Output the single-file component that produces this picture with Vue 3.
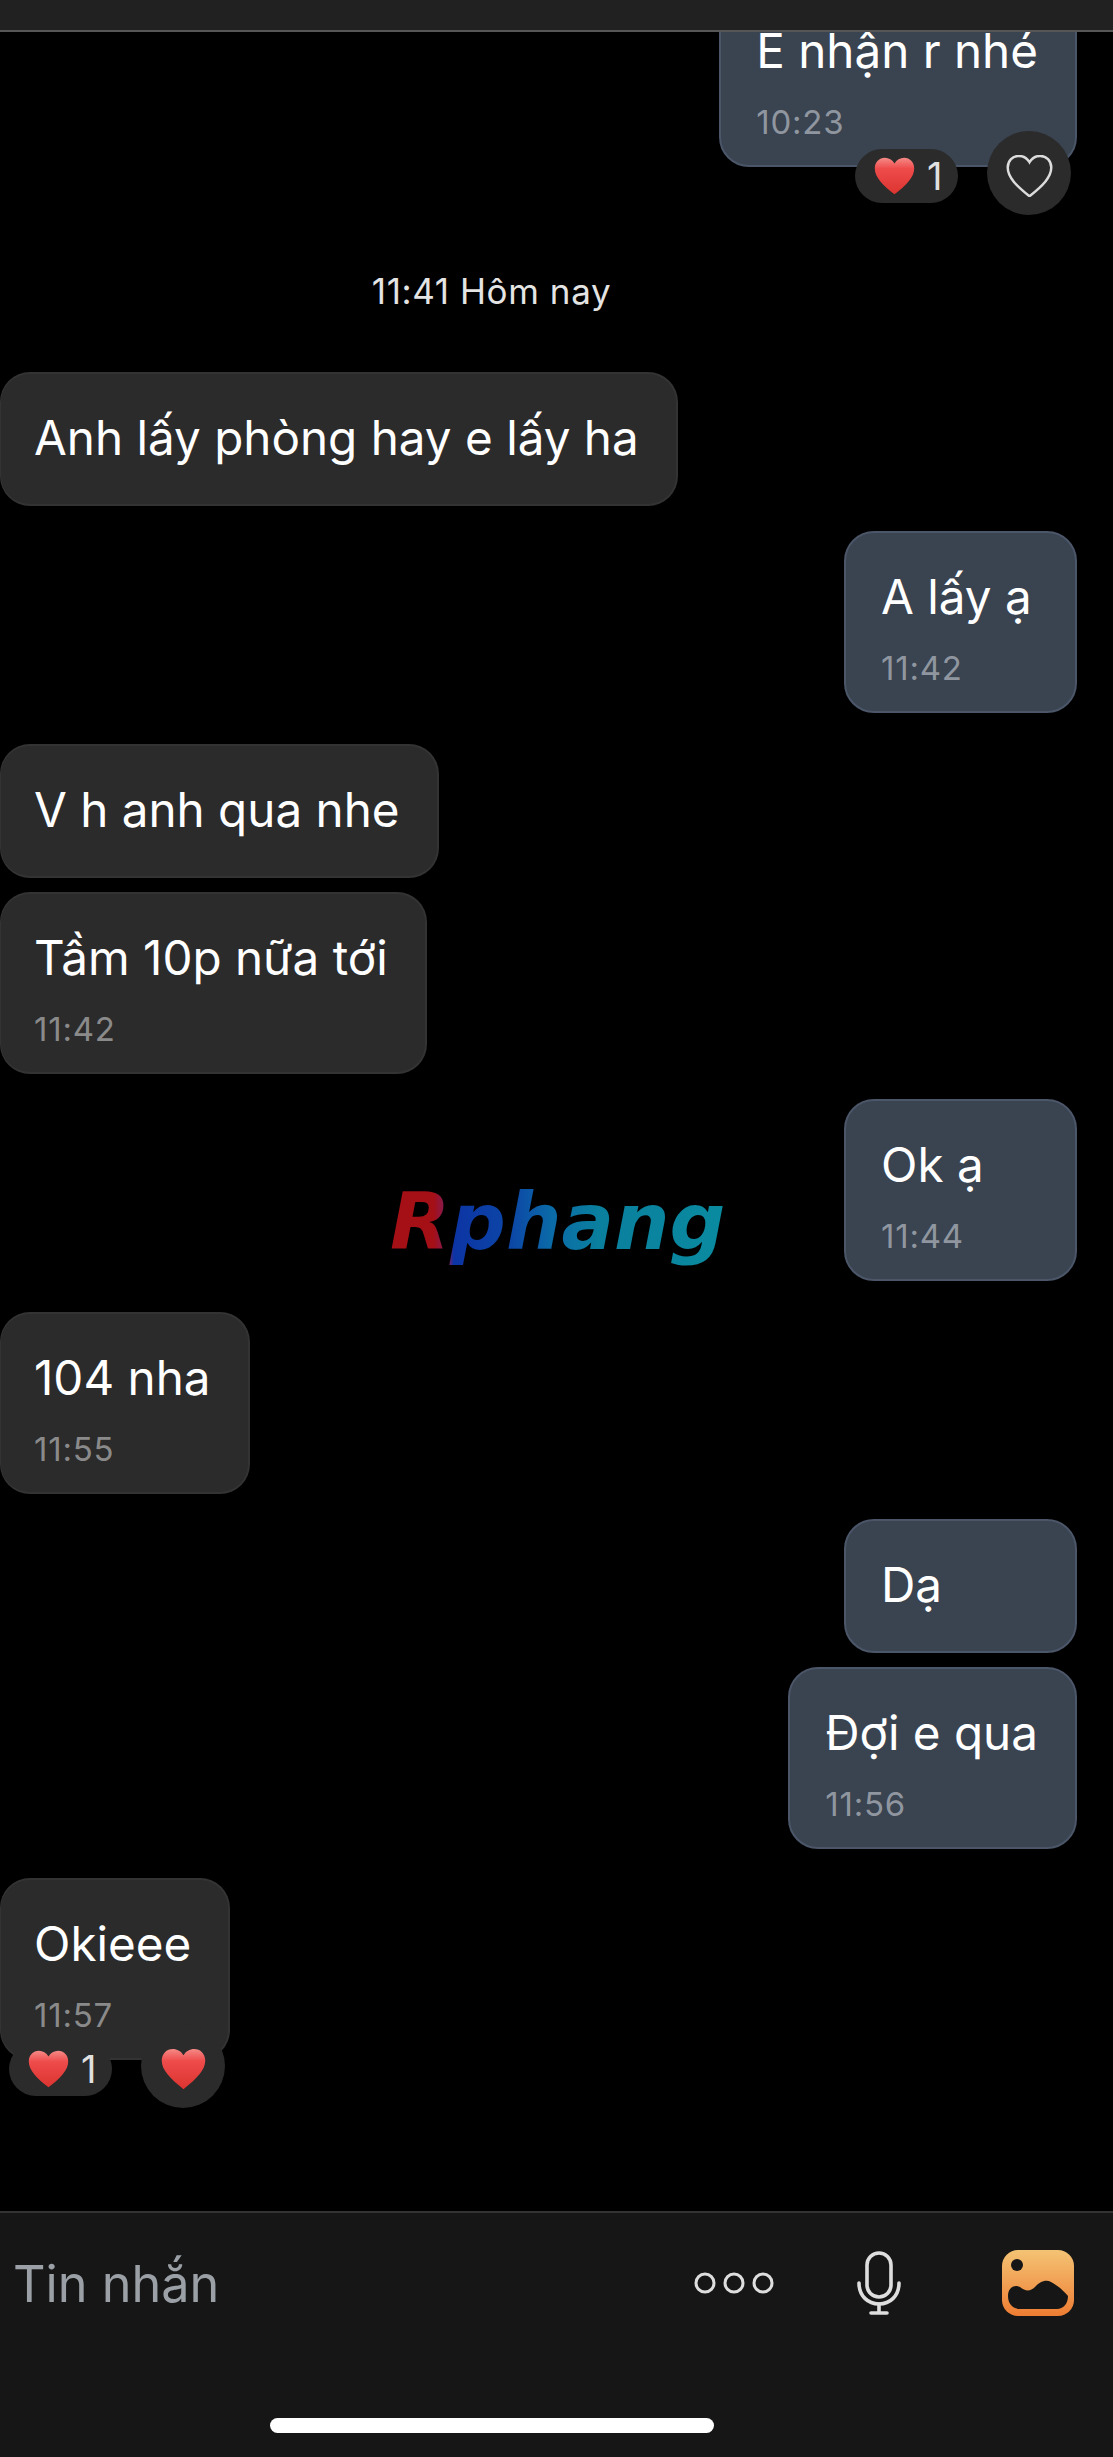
<script setup>
const messages = [
  { id: 1, text: 'E nhận r nhé', time: '10:23', mine: true, gap: 'first', reaction: { liked: false } },
  { id: 2, stamp: '11:41 Hôm nay' },
  { id: 3, text: 'Anh lấy phòng hay e lấy ha', gap: 'none' },
  { id: 4, text: 'A lấy ạ', time: '11:42', mine: true, gap: 'mid' },
  { id: 5, text: 'V h anh qua nhe', gap: 'wide' },
  { id: 6, text: 'Tầm 10p nữa tới', time: '11:42', gap: 'tight' },
  { id: 7, text: 'Ok ạ', time: '11:44', mine: true, gap: 'mid' },
  { id: 8, text: '104 nha', time: '11:55', gap: 'wide' },
  { id: 9, text: 'Dạ', mine: true, gap: 'mid' },
  { id: 10, text: 'Đợi e qua', time: '11:56', mine: true, gap: 'tight' },
  { id: 11, text: 'Okieee', time: '11:57', gap: 'last', reaction: { liked: true } }
]

const heart = 'M12 21.6C5.2 16.2.6 11.7.6 6.6.6 3 3.2.5 6.4.5c2.3 0 4.4 1.2 5.6 3.3C13.2 1.7 15.3.5 17.6.5c3.2 0 5.8 2.5 5.8 6.1 0 5.1-4.6 9.6-11.4 15z'
</script>

<template>
  <div class="page">
    <svg class="defs" width="0" height="0" aria-hidden="true">
      <defs>
        <linearGradient id="heartFill" x1="0" y1="0" x2="0" y2="1">
          <stop offset="0" stop-color="#f58a86" />
          <stop offset="0.3" stop-color="#ee4b4b" />
          <stop offset="1" stop-color="#dc3430" />
        </linearGradient>
        <linearGradient id="photoFill" x1="0" y1="0" x2="0" y2="1">
          <stop offset="0" stop-color="#f4c374" />
          <stop offset="1" stop-color="#ee7d33" />
        </linearGradient>
      </defs>
    </svg>

    <div class="top-bar"></div>

    <main class="chat">
      <template v-for="m in messages" :key="m.id">
        <div v-if="m.stamp" class="stamp">{{ m.stamp }}</div>
        <div v-else class="row" :class="[m.mine ? 'mine' : 'theirs', 'gap-' + m.gap]">
          <div class="bubble" :class="{ timed: m.time }">
            <div class="text">{{ m.text }}</div>
            <div v-if="m.time" class="time">{{ m.time }}</div>
            <div v-if="m.reaction" class="reacts">
              <div class="pill">
                <svg class="pill-heart" viewBox="0 0 24 22"><path :d="heart" fill="url(#heartFill)" /></svg>
                <span>1</span>
              </div>
              <div class="circle">
                <svg v-if="m.reaction.liked" class="big-heart" viewBox="0 0 24 22"><path :d="heart" fill="url(#heartFill)" /></svg>
                <svg v-else class="big-heart" viewBox="0 0 24 22"><path :d="heart" fill="none" stroke="#dcdcdc" stroke-width="1.3" /></svg>
              </div>
            </div>
          </div>
        </div>
      </template>

      <div class="watermark">Rphang</div>
    </main>

    <footer class="composer">
      <div class="input-row">
        <span class="placeholder">Tin nhắn</span>
        <svg class="dots" viewBox="0 0 80 22" fill="none" stroke="#dedede" stroke-width="3">
          <circle cx="11" cy="11" r="9" />
          <circle cx="40" cy="11" r="9" />
          <circle cx="69" cy="11" r="9" />
        </svg>
        <svg class="mic" viewBox="0 0 44 64" fill="none" stroke="#dedede" stroke-width="3.6" stroke-linecap="round">
          <rect x="10" y="2" width="24" height="44" rx="12" />
          <path d="M2 32c0 13 9 21 20 21s20-8 20-21" />
          <path d="M22 53v9M14 62h16" />
        </svg>
        <svg class="photo" viewBox="0 0 72 66">
          <rect width="72" height="66" rx="16" fill="url(#photoFill)" />
          <circle cx="15" cy="15" r="6" fill="#161616" />
          <path d="M6 46c0-8 6-12 12-9 5 4 10 5 15 0 4-5 11-8 16-5 6 3 13 9 17 14 0 8-5 13-11 13H18C11 59 6 54 6 46z" fill="#161616" />
        </svg>
      </div>
      <div class="home-row"><div class="home"></div></div>
    </footer>
  </div>
</template>

<style>
body {
  background: #000;
}
</style>

<style scoped>
.page {
  position: relative;
  width: 1113px;
  height: 2457px;
  display: flex;
  flex-direction: column;
  background: #000;
  overflow: hidden;
  font-family: Inter, "Noto Sans", sans-serif;
  color: #fff;
}

.defs {
  position: absolute;
}

.top-bar {
  height: 32px;
  box-sizing: border-box;
  background: #212121;
  border-bottom: 2px solid #565656;
  flex: none;
}

.chat {
  position: relative;
  flex: 1;
  overflow: hidden;
  display: flex;
  flex-direction: column;
}

.stamp {
  margin-top: 104px;
  margin-bottom: 61px;
  padding-right: 130px;
  text-align: center;
  font-size: 35px;
  line-height: 40px;
  letter-spacing: 0.6px;
  color: #e4e4e4;
}

.row {
  display: flex;
}

.mine {
  justify-content: flex-end;
  padding-right: 36px;
}

.gap-first { margin-top: -47px; }
.gap-none { margin-top: 0; }
.gap-tight { margin-top: 14px; }
.gap-mid { margin-top: 25px; }
.gap-wide { margin-top: 31px; }
.gap-last { margin-top: 29px; }

.bubble {
  position: relative;
  box-sizing: border-box;
  padding: 37px 37px 40px 33px;
  border-radius: 30px;
  border: 2px solid #333;
  background: #2b2b2b;
}

.theirs .bubble {
  border-left-width: 1px;
}

.mine .bubble {
  min-width: 233px;
  padding-left: 35px;
  background: #3a4350;
  border-color: #4b5669;
}

.bubble.timed {
  padding-bottom: 23px;
}

.text {
  font-size: 47.6px;
  line-height: 53px;
  white-space: nowrap;
}

.time {
  margin-top: 25px;
  font-size: 33px;
  line-height: 40px;
  letter-spacing: 0.8px;
  color: #8a8a8a;
}

.mine .time {
  color: #8f969f;
}

.reacts {
  position: absolute;
  display: flex;
  align-items: center;
  gap: 29px;
  bottom: -50px;
}

.mine .reacts {
  right: 4px;
}

.theirs .reacts {
  left: 8px;
}

.pill {
  display: flex;
  align-items: center;
  gap: 11px;
  box-sizing: border-box;
  width: 103px;
  height: 54px;
  margin-top: 6px;
  padding-left: 18px;
  border-radius: 27px;
  background: #2b2b2b;
  font-size: 38px;
  color: #e0e0e0;
}

.pill-heart {
  width: 43px;
  height: 38px;
}

.circle {
  display: flex;
  align-items: center;
  justify-content: center;
  width: 84px;
  height: 84px;
  border-radius: 50%;
  background: #2b2b2b;
}

.big-heart {
  width: 47px;
  height: 42px;
  margin-top: 5px;
}

.watermark {
  position: absolute;
  left: 390px;
  top: 1140px;
  font-family: "DejaVu Sans", sans-serif;
  font-size: 78px;
  line-height: 100px;
  font-weight: 700;
  font-style: italic;
  white-space: nowrap;
  background: linear-gradient(90deg, #a50f16 0, #a50f16 13%, #7a1f66 17.5%, #0c34a4 19%, #0c46a6 36%, #0b6aa8 48%, #0a7f9e 62%, #0a8ba0 100%);
  -webkit-background-clip: text;
  background-clip: text;
  color: transparent;
}

.composer {
  flex: none;
  height: 246px;
  box-sizing: border-box;
  background: #161616;
  border-top: 2px solid #333;
}

.input-row {
  display: flex;
  align-items: center;
  height: 140px;
  padding: 0 39px 0 13px;
}

.placeholder {
  font-size: 50.4px;
  color: #9aa0a6;
}

.dots {
  width: 80px;
  height: 22px;
  margin-left: auto;
}

.mic {
  width: 44px;
  height: 64px;
  margin-left: 83px;
}

.photo {
  width: 72px;
  height: 66px;
  margin-left: 101px;
}

.home-row {
  display: flex;
  justify-content: center;
  padding-right: 130px;
  margin-top: 65px;
}

.home {
  width: 444px;
  height: 15px;
  border-radius: 8px;
  background: #fff;
}
</style>
